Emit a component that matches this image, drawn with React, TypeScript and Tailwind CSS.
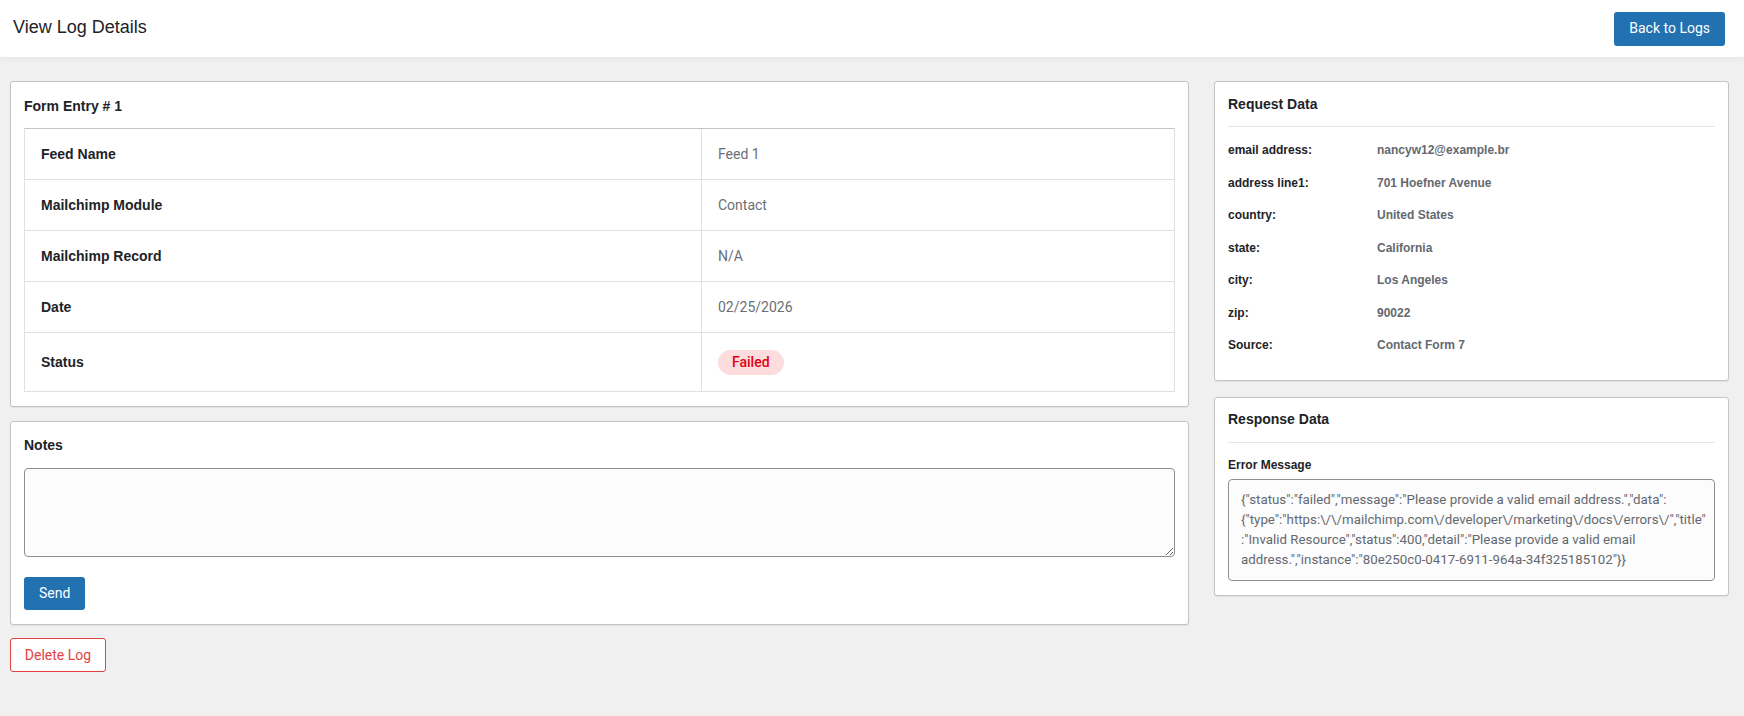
const entryRows = [
  { label: "Feed Name", value: "Feed 1" },
  { label: "Mailchimp Module", value: "Contact" },
  { label: "Mailchimp Record", value: "N/A" },
  { label: "Date", value: "02/25/2026" },
];

const requestData = [
  { label: "email address:", value: "nancyw12@example.br" },
  { label: "address line1:", value: "701 Hoefner Avenue" },
  { label: "country:", value: "United States" },
  { label: "state:", value: "California" },
  { label: "city:", value: "Los Angeles" },
  { label: "zip:", value: "90022" },
  { label: "Source:", value: "Contact Form 7" },
];

// wrapped exactly as in the log viewer
const errorLines = [
  '{"status":"failed","message":"Please provide a valid email address.","data":',
  '{"type":"https:\\/\\/mailchimp.com\\/developer\\/marketing\\/docs\\/errors\\/","title"',
  ':"Invalid Resource","status":400,"detail":"Please provide a valid email',
  'address.","instance":"80e250c0-0417-6911-964a-34f325185102"}}',
];

const sans = "font-['Liberation_Sans',Arial,sans-serif]";
const roboto = "font-['Roboto',sans-serif]";

function Card({ children, className = "" }: { children: React.ReactNode; className?: string }) {
  return (
    <div
      className={`bg-white border border-[#c3c4c7] rounded-[3px] shadow-[0_1px_1px_rgba(0,0,0,0.06)] px-[13px] ${className}`}
    >
      {children}
    </div>
  );
}

export default function App() {
  return (
    <div className={`min-h-[716px] bg-[#f0f0f1] ${sans} text-[#1d2327]`}>
      {/* Top bar */}
      <header className="relative z-10 h-[57px] bg-white flex items-center justify-between pl-[13px] pr-[19px] shadow-[0_2px_6px_rgba(0,0,0,0.04)]">
        <h1 className="text-[18px] leading-6 -mt-[3px]">View Log Details</h1>
        <button
          className={`h-[34px] px-[15px] rounded-[3px] bg-[#2271b1] text-white text-[14px] ${roboto}`}
        >
          Back to Logs
        </button>
      </header>

      <main className="flex items-start gap-[25px] pt-6 pl-[10px] pr-[15px]">
        {/* Left column */}
        <div className="flex-1 min-w-0 flex flex-col">
          <Card className="pt-[14px] pb-[14px]">
            <h2 className="text-[14px] leading-5 font-bold">Form Entry # 1</h2>
            <div className="mt-3 border border-[#e0e0e0] border-t-[#c3c4c7]">
              {entryRows.map((row) => (
                <div key={row.label} className="flex h-[51px] border-b border-[#e0e0e0]">
                  <div className="w-[677px] shrink-0 border-r border-[#e0e0e0] pl-4 flex items-center text-[14px] font-bold">
                    {row.label}
                  </div>
                  <div className={`flex-1 pl-4 flex items-center text-[14px] text-[#6b6f75] ${roboto}`}>
                    {row.value}
                  </div>
                </div>
              ))}
              <div className="flex h-[58px]">
                <div className="w-[677px] shrink-0 border-r border-[#e0e0e0] pl-4 flex items-center text-[14px] font-bold">
                  Status
                </div>
                <div className="flex-1 pl-4 flex items-center">
                  <span
                    className={`h-[25px] px-[14px] rounded-full bg-[#fcdcdc] text-[#e00012] text-[14px] font-medium leading-[25px] ${roboto}`}
                  >
                    Failed
                  </span>
                </div>
              </div>
            </div>
          </Card>

          <Card className="mt-[14px] pt-[13px] pb-[14px]">
            <h2 className="text-[14px] leading-5 font-bold">Notes</h2>
            <textarea className="mt-[13px] block w-full h-[89px] border border-[#8c8f94] rounded-[4px] bg-[#fcfcfc] outline-none" />
            <button
              className={`mt-5 h-[33px] px-[15px] rounded-[3px] bg-[#2271b1] text-white text-[14px] ${roboto}`}
            >
              Send
            </button>
          </Card>

          <div className="mt-[13px]">
            <button
              className={`h-[34px] w-[96px] rounded-[3px] bg-white border border-[#e3413f] text-[#e3413f] text-[14px] ${roboto}`}
            >
              Delete Log
            </button>
          </div>
        </div>

        {/* Right column */}
        <div className="w-[515px] shrink-0 flex flex-col">
          <Card className="pt-[12px] pb-[18px]">
            <h2 className="text-[14px] leading-5 font-bold pb-3 border-b border-[#e5e5e5]">Request Data</h2>
            <div className="mt-[7px]">
              {requestData.map((row) => (
                <div key={row.label} className="flex items-center h-[32.5px] text-[12px] font-bold">
                  <span className="w-[149px] shrink-0">{row.label}</span>
                  <span className="text-[#646970]">{row.value}</span>
                </div>
              ))}
            </div>
          </Card>

          <Card className="mt-4 pt-[11px] pb-[14px]">
            <h2 className="text-[14px] leading-5 font-bold pb-[13px] border-b border-[#e5e5e5]">Response Data</h2>
            <div className="mt-[14px] text-[12px] leading-4 font-bold">Error Message</div>
            <div
              className={`mt-[6px] border border-[#8c8f94] rounded-[4px] bg-[#fcfcfc] px-3 py-[10px] text-[13.3px] leading-5 text-[#646970] ${roboto}`}
            >
              {errorLines.map((line) => (
                <div key={line} className="whitespace-nowrap">
                  {line}
                </div>
              ))}
            </div>
          </Card>
        </div>
      </main>
    </div>
  );
}
